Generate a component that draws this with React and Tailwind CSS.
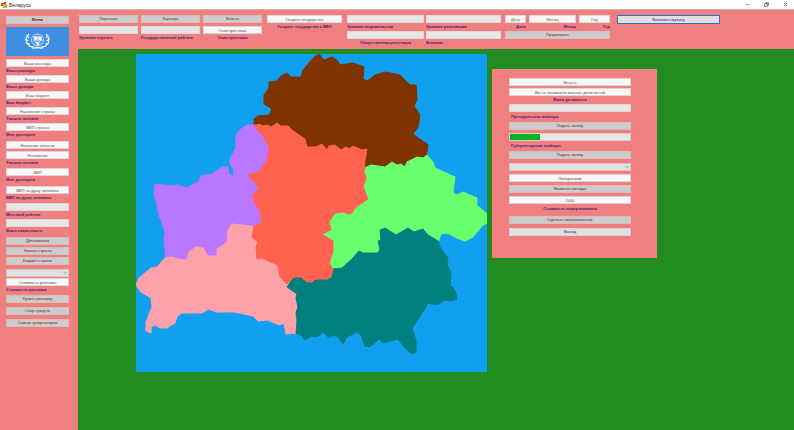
import React, { useId } from "react";
import { Minus, Copy, X, ChevronDown } from "lucide-react";

function Caption({ children, htmlFor, className = "" }) {
  return (
    <label htmlFor={htmlFor} className={`block h-2 whitespace-nowrap text-[4px] leading-[8px] font-bold text-[#4a2080] ${className}`}>
      {children}
    </label>
  );
}

function Field({ value = "", caption, label, className = "", captionClass = "", empty = false }) {
  const id = useId();
  return (
    <div className={className}>
      <input
        id={id}
        readOnly
        defaultValue={value}
        aria-label={caption ? undefined : label || value}
        className={`block h-2 w-full min-w-0 border border-[#e4d4d4] text-center text-[4px] leading-[6px] text-[#555] outline-none ${empty ? "bg-[#e6e6e6]" : "bg-[#f8f8f8]"}`}
      />
      {caption && <Caption htmlFor={id} className={captionClass}>{caption}</Caption>}
    </div>
  );
}

function Btn({ children, className = "" }) {
  return (
    <button
      type="button"
      className={`flex h-2 w-full items-center justify-center border border-[#d6bcbc] bg-[#cccccc] text-[4px] leading-[6px] whitespace-nowrap text-[#7a1420] ${className}`}
    >
      {children}
    </button>
  );
}

function Dropdown({ label, className = "" }) {
  return (
    <div className={`relative ${className}`}>
      <select aria-label={label} className="block h-2 w-full appearance-none border border-[#d8c6c6] bg-[#e1e1e1] text-[4px]">
        <option></option>
      </select>
      <ChevronDown size={4} strokeWidth={3} className="pointer-events-none absolute top-[2px] right-[2px] text-[#555]" />
    </div>
  );
}

function Emblem() {
  return (
    <svg viewBox="0 0 62 29" className="block h-[29px] w-full bg-[#3f8ee0]" fill="none" stroke="#e8f3ff">
      <circle cx="31" cy="13" r="6" strokeWidth="0.7" />
      <circle cx="31" cy="13" r="3" strokeWidth="0.5" />
      <path d="M31 7v12M25 13h12M27 9l8 8M35 9l-8 8" strokeWidth="0.4" />
      <path d="M27 10l3-1 1 3-3 2zM32 9l3 1 0 4-3-1zM29 15l3 0 1 3-3 0z" fill="#e8f3ff" strokeWidth="0.3" />
      <path d="M22.500 7c-4.500 4-4 11 4 13.500M39.500 7c4.500 4 4 11-4 13.500M26 20l10 1.500M36 20l-10 1.500" strokeWidth="1.2" />
      <path d="M20.500 8l2 3M19 12l3 2M19.500 16l4 1M23 19.500l4 0M41.500 8l-2 3M43 12l-3 2M42.500 16l-4 1M39 19.500l-4 0" strokeWidth="1.2" />
    </svg>
  );
}

const regions = [
  { fill: "#7f3300", d: "M254 127V119L258 116L269 115L272 109L269 107L264 104V95L269 88V82L277 81L281 76L287 73L291 77L301 77L303 70L314 57L319 54L324 60L332 57L337 60L340 65L353 63L364 67L363 79L367 81L375 75L386 72L400 75L410 85L416 85L417 100L414 106L420 115L418 127L413 134L428 145L426 157L417 164L405 172L365 172L340 160L300 155L270 135Z" },
  { fill: "#b976ff", d: "M256 125L247 125L241 129L236 135V148L232 155L229 162L234 170L233 176L229 174L228 167L222 167L212 174L201 176L199 181L187 188L177 185L171 186L155 184L154 193L157 205L159 215L165 232L164 238L166 262L220 265L270 230L275 130Z" },
  { fill: "#ffa1aa", d: "M165 258L172 257L177 259L187 260L189 252L196 247L203 248L208 256L217 256V249L227 242L228 230L232 224L252 226L275 240L295 280L297 294L296 298L298 307L296 313L297 320L296 333L286 334L284 323L279 325L267 320L258 321L253 316L234 312L216 312L209 309L202 313L181 313L177 317L175 323L167 328L160 328L155 325L151 327V333L146 331V322L152 307L151 298L141 292L136 285L139 278L151 268L157 267Z" },
  { fill: "#6aff6d", d: "M364 171L366 167L371 165L385 167L392 162L397 165L401 164L405 167L407 162L417 157L423 158L427 155L433 162L435 168L455 177L453 193L457 195L463 192L477 198V205L487 214V223L482 226L473 237L465 241L457 238L447 233L441 234L438 242L400 260L345 275H325L315 235L340 205Z" },
  { fill: "#007f7f", d: "M287 287L294 277H301L315 275L331 277L333 269L342 268L352 259L359 251L363 253H378L380 249L378 241L381 240L380 230L385 228L396 235L408 228L414 232L423 229L428 235L438 241L440 247L448 258L447 265L451 272L450 285L455 290L457 299L451 301L445 300L437 305L427 303L426 307L416 322L412 329L416 340V352L412 354L405 348L398 339L383 343L379 339L370 347L365 346L361 335L357 332L347 337L343 344L338 337L334 335L329 338L323 332L317 337L310 336L309 338L305 340L302 336L296 333L297 320L296 313L298 307L296 298L297 294Z" },
  { fill: "#ff624f", d: "M254 126L260 124L262 126L267 125L271 127L277 123L281 126L288 126L292 130L305 139L307 147L316 147L322 144L327 150L329 146L335 145L341 150L346 147L349 149L353 146L362 150L367 149L365 160L364 172L366 178L363 187L368 199L355 208L352 213L348 214L343 212L335 213L329 222L331 230L322 234L333 241V252L329 263L333 269L331 277L327 279H315L312 282H307L301 277H294L287 284L280 277L278 265L262 258L257 259L256 247L258 242L252 237L254 226L262 223L260 212L252 196L259 188L248 175L259 172L267 160L269 148L264 137Z" },
];

function RegionMap() {
  return (
    <svg viewBox="136 54 351 318" className="block w-[351px] shrink-0 bg-[#119ff0]" role="img" aria-label="Беларусь">
      {regions.map((r) => (
        <path key={r.fill} d={r.d} fill={r.fill} stroke={r.fill} strokeWidth="1" strokeLinejoin="round" />
      ))}
    </svg>
  );
}

function Sidebar() {
  return (
    <aside className="w-[78px] shrink-0 bg-[#f08080] pt-[6px] pr-[9px] pl-[6px]">
      <Btn className="font-bold">Меню</Btn>
      <div className="my-[3px]"><Emblem /></div>
      <Field value="Ваши расходы" caption="Ваши расходы" />
      <Field value="Ваши доходы" caption="Ваши доходы" />
      <Field value="Ваш бюджет" caption="Ваш бюджет" />
      <Field value="Население страны" caption="Тысячи человек" />
      <Field value="ВВП страны" caption="Млн долларов" />
      <Field value="Название области" className="mt-[2px]" />
      <Field value="Население" caption="Тысячи человек" className="mt-[2px]" />
      <Field value="ВВП" caption="Млн долларов" className="mt-px" />
      <Field value="ВВП на душу человека" caption="ВВП на душу человека" className="mt-[2px]" />
      <Field empty caption="Местный рейтинг" className="mt-px" />
      <Field empty caption="Ваша известность" />
      <div className="mt-[2px] flex flex-col gap-[2px]">
        <Btn>Дипломатия</Btn>
        <Btn>Законы страны</Btn>
        <Btn>Бюджет страны</Btn>
      </div>
      <Dropdown label="Вид рекламы" className="mt-1" />
      <Field value="Стоимость рекламы" caption="Стоимость рекламы" className="mt-px" />
      <div className="mt-px flex flex-col gap-1">
        <Btn>Купить рекламу</Btn>
        <Btn>Сбор средств</Btn>
        <Btn>Список губернаторов</Btn>
      </div>
    </aside>
  );
}

function TopBar() {
  return (
    <header className="flex items-start bg-[#f08080] pt-[5px] pb-[2px] pl-px">
      <div className="flex gap-[3px]">
        <div className="w-[59px]">
          <Btn>Персонал</Btn>
          <Field empty caption="Уровень стресса" className="mt-[3px]" />
        </div>
        <div className="w-[59px]">
          <Btn>Карьера</Btn>
          <Field empty caption="Государственный рейтинг" className="mt-[3px]" />
        </div>
        <div className="w-[59px]">
          <Btn>Власть</Btn>
          <Field value="Очки престижа" caption="Очки престижа" className="mt-[3px]" captionClass="text-center" />
        </div>
      </div>
      <Field value="Госдолг государства" caption="Госдолг государства к ВВП" className="ml-[5px] w-[75px]" captionClass="text-center" />
      <div className="ml-[5px] flex gap-[2px]">
        <div className="w-[77px]">
          <Field empty caption="Уровень недовольства" />
          <Field empty caption="Общественная репутация" captionClass="text-center" />
        </div>
        <div className="w-[75px]">
          <Field empty caption="Уровень революции" />
          <Field empty caption="Влияние" />
        </div>
      </div>
      <div className="ml-1 w-[105px]">
        <div className="flex gap-[3px]">
          <Field value="День" caption="День" className="w-[21px]" captionClass="text-right" />
          <Field value="Месяц" caption="Месяц" className="flex-1" captionClass="text-right" />
          <Field value="Год" caption="Год" className="w-[31px]" captionClass="text-right" />
        </div>
        <Btn>Продолжить</Btn>
      </div>
      <button type="button" className="ml-[7px] flex h-[9px] w-[103px] items-center justify-center border border-[#2f6fd0] bg-[#e1e1e1] text-[4px] leading-[7px] text-[#20208a]">
        Включить музыку
      </button>
    </header>
  );
}

function PowerPanel() {
  return (
    <section className="mt-[15px] h-fit w-[165px] shrink-0 bg-[#f08080] px-[17px] pt-[9px] pb-[22px]">
      <div className="w-[122px]">
        <Field value="Власть" />
        <Field value="Вы не занимаете важных должностей" caption="Ваша должность" className="mt-[2px]" captionClass="text-center" />
        <Field empty label="Рейтинг" />
        <Caption className="my-px pl-[2px]">Президентские выборы</Caption>
        <Btn>Подать заявку</Btn>
        <div role="progressbar" aria-label="Президентские выборы" aria-valuenow={24} className="mt-[3px] h-2 border border-[#dccaca] bg-[#e6e6e6]">
          <div className="h-full w-1/4 bg-[#06b025]" />
        </div>
        <Caption className="my-px pl-[2px]">Губернаторские выборы</Caption>
        <Btn>Подать заявку</Btn>
        <Dropdown label="Партия" className="mt-1" />
        <div className="mt-[3px] flex flex-col gap-[3px]">
          <Field value="Либерализм" />
          <Btn>Написать методы</Btn>
          <Field value="1000" caption="Стоимость пожертвования" captionClass="mt-px text-center" />
          <Btn>Сделать пожертвование</Btn>
        </div>
        <button type="button" className="mt-1 flex h-2 w-full items-center justify-center border border-[#e0d0d0] bg-[#e1e1e1] text-[4px] leading-[6px] text-[#20208a]">
          Выход
        </button>
      </div>
    </section>
  );
}

export default function App() {
  return (
    <div className="flex min-h-screen flex-col bg-[#228b22] font-['Liberation_Sans',Arial,sans-serif]">
      <div className="flex h-[10px] items-center justify-between border-b border-[#c9b4b4] bg-white pr-[6px] pl-px">
        <div className="flex items-center gap-[2px]">
          <svg viewBox="0 0 6 6" className="size-[6px]">
            <rect x="0" y="1" width="3" height="3" fill="#d9534a" />
            <rect x="2" y="2" width="4" height="4" fill="#e0a92c" />
            <rect x="3" y="0" width="2" height="2" fill="#4b6b45" />
          </svg>
          <h1 className="text-[5px] leading-[8px] text-[#222]">Беларусь</h1>
        </div>
        <div className="flex items-center gap-[14px] text-[#333]">
          <button type="button" aria-label="Свернуть"><Minus size={5} /></button>
          <button type="button" aria-label="Развернуть"><Copy size={5} strokeWidth={3} className="-scale-x-100" /></button>
          <button type="button" aria-label="Закрыть"><X size={5} strokeWidth={3} /></button>
        </div>
      </div>
      <div className="flex flex-1">
        <Sidebar />
        <div className="min-w-0 flex-1">
          <TopBar />
          <main className="flex items-start gap-[5px] pt-[5px] pl-[58px]">
            <RegionMap />
            <PowerPanel />
          </main>
        </div>
      </div>
    </div>
  );
}
